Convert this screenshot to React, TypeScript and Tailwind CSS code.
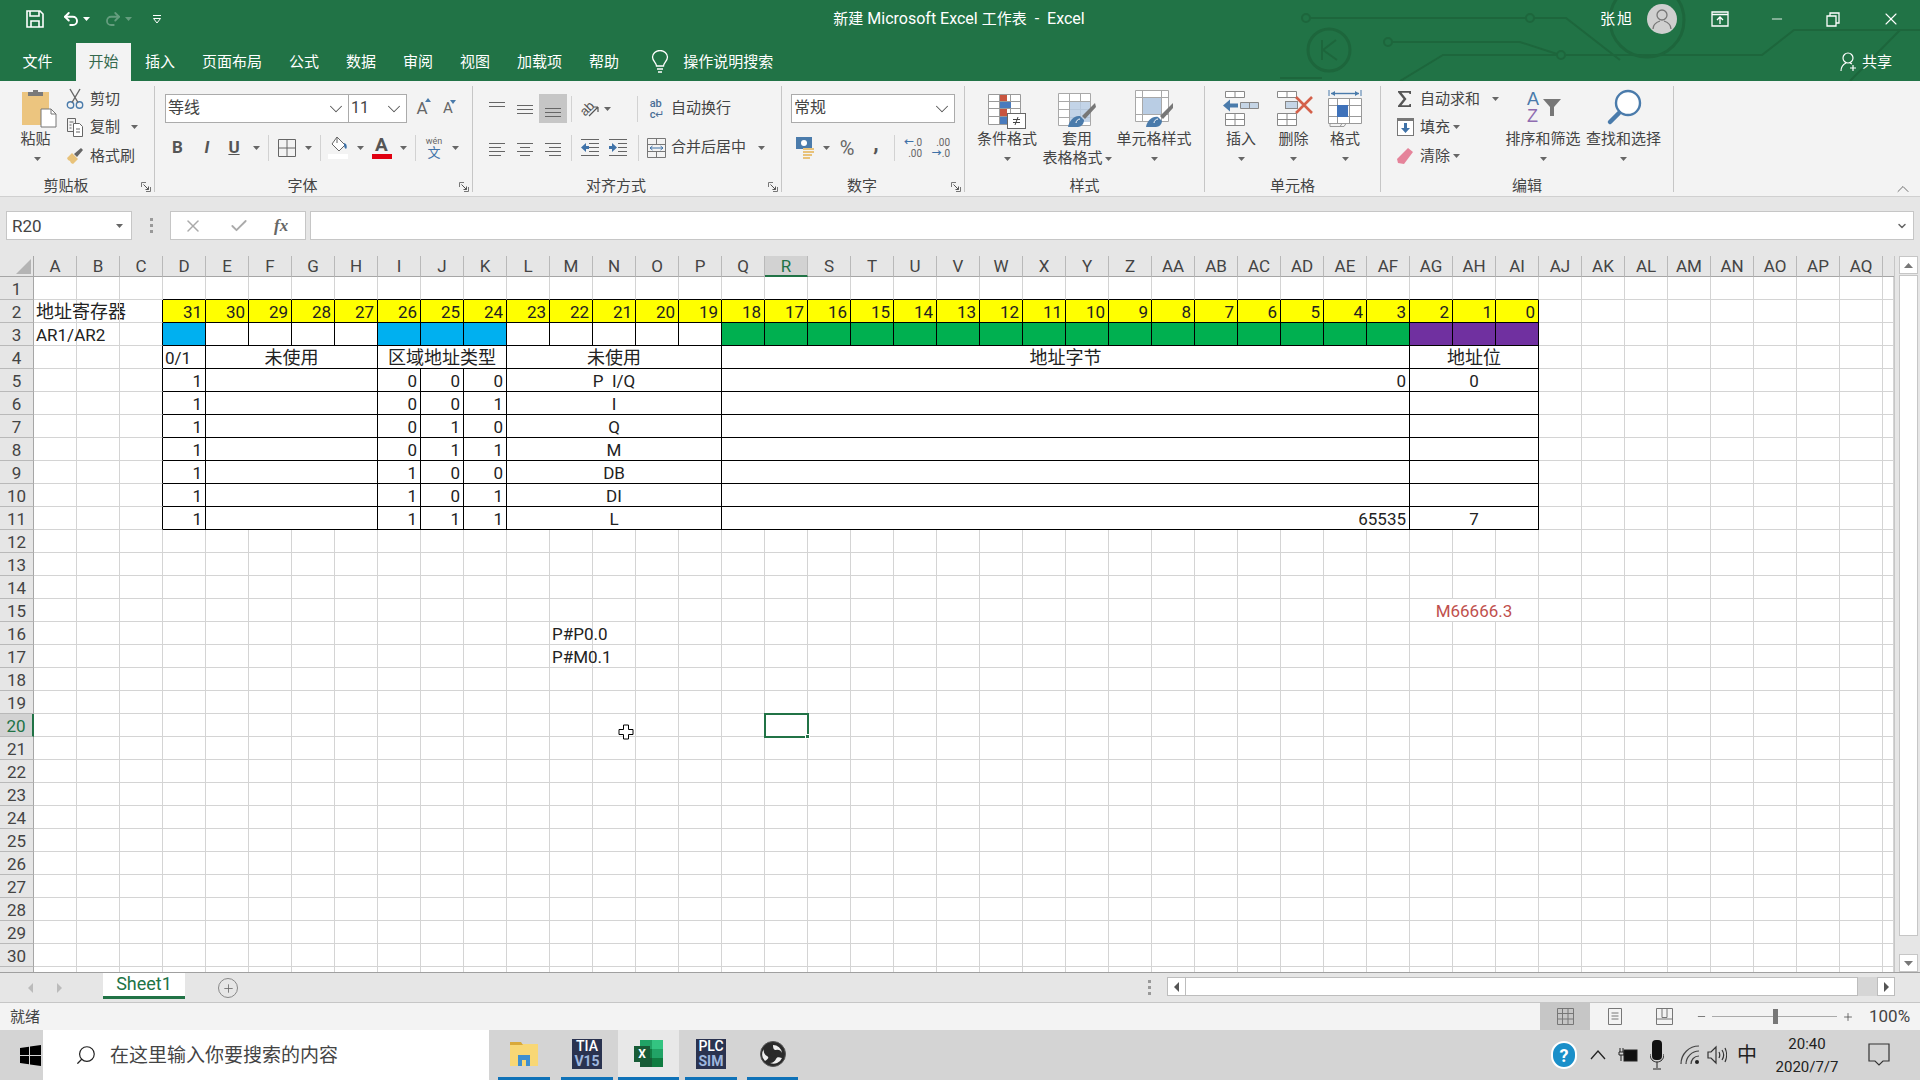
import React from "react";
import { ChevronDown, ChevronUp, Minus, Plus, X, Check, Undo2, Redo2, Search } from "lucide-react";

const Tri = ({ c = "#666" }: { c?: string }) => (
  <svg width="7" height="4" viewBox="0 0 7 4" className="shrink-0"><path d="M0 0h7L3.5 4z" fill={c} /></svg>
);

const Launcher = () => (
  <svg width="10" height="10" viewBox="0 0 10 10" className="absolute right-[3px] bottom-[0px]">
    <path d="M.5 5V.5H5M9.5 5v4.5H5" fill="none" stroke="#777" />
    <path d="M2.5 2.5L7.5 7.5M7.5 4.5v3h-3" fill="none" stroke="#555" />
  </svg>
);

const Group = ({ className, label, launcher, children }: { className: string; label: string; launcher?: boolean; children: React.ReactNode }) => (
  <div className={"relative flex flex-col h-[106px] shrink-0 border-r border-[#c6c6c6] " + className}>
    <div className="flex-1 min-h-0 flex flex-col">{children}</div>
    <div className={"h-[16px] leading-[20px] text-center text-[15px] whitespace-nowrap " + (launcher ? "pr-[22px]" : "")}>{label}</div>
    {launcher && <Launcher />}
  </div>
);

const Big = ({ className, icon, lines, top = "pt-[4px]" }: { className: string; icon: React.ReactNode; lines: string[]; top?: string }) => (
  <div className={"flex flex-col items-center shrink-0 " + className}>
    <div className={"h-[44px] flex items-start justify-center " + top}>{icon}</div>
    <div className="h-[19px] leading-[19px] text-[15px] whitespace-nowrap">{lines[0]}</div>
    {lines[1] ? (
      <div className="h-[19px] leading-[19px] text-[15px] whitespace-nowrap flex items-center gap-[2px]">{lines[1]}<Tri /></div>
    ) : (
      <div className="h-[19px] flex items-center"><Tri /></div>
    )}
  </div>
);

const Lines = ({ rows }: { rows: [number, number, number][] }) => (
  <svg width="20" height="18" viewBox="0 0 20 18">
    {rows.map(([y, a, b], i) => <path key={i} d={`M${a} ${y}.5H${b}`} stroke="#666" strokeWidth="1" />)}
  </svg>
);

const Sep = ({ className = "" }: { className?: string }) => <div className={"w-px h-[26px] bg-[#d2d2d2] shrink-0 " + className} />;

const Combo = ({ className, text }: { className: string; text: string }) => (
  <div className={"h-[29px] bg-white border border-[#ababab] flex items-center justify-between pl-[2px] pr-[1px] text-[16px] shrink-0 " + className}>
    <span className="pb-[1px]">{text}</span>
    <ChevronDown size={22} strokeWidth={1.1} color="#555" />
  </div>
);

const PasteIcon = () => (
  <svg width="36" height="40" viewBox="0 0 36 40">
    <rect x="1" y="4" width="27" height="33" fill="#ecc57f" />
    <path d="M7 8V4h5V2h5v2h5v4z" fill="#7a7a7a" />
    <path d="M20 21h10l5 5v13H20z" fill="#fff" stroke="#777" />
    <path d="M30 21v5h5" fill="none" stroke="#777" />
  </svg>
);
const Scissors = () => (
  <svg width="18" height="22" viewBox="0 0 18 22" fill="none">
    <circle cx="4.5" cy="17" r="3.2" stroke="#4a7bab" strokeWidth="1.4" />
    <circle cx="13.5" cy="17" r="3.2" stroke="#4a7bab" strokeWidth="1.4" />
    <path d="M6 14.5L14 1M12 14.5L4 1" stroke="#666" strokeWidth="1.4" />
  </svg>
);
const CopyIcon = () => (
  <svg width="18" height="20" viewBox="0 0 18 20" fill="none" stroke="#666">
    <path d="M1.5 1.5h8v13h-8z" fill="#f3f3f3" />
    <path d="M7.5 6.5h6l3 3v10h-9z" fill="#fff" />
    <path d="M3.5 5h4M3.5 8h2M3.5 11h2M10 12h4M10 15h4" />
  </svg>
);
const BrushIcon = () => (
  <svg width="18" height="18" viewBox="0 0 18 18">
    <path d="M1 11l5-5 6 6-5 5-2-1-1-2-2-1z" fill="#e8c27a" />
    <path d="M8 7l7-6 2 2-6 7z" fill="#666" />
  </svg>
);
const CondIcon = () => (
  <svg width="38" height="36" viewBox="0 0 38 36">
    <path d="M.5.5h32v30H.5zM.5 7.500h32M.5 14.500h32M.5 22.500h32M11.500.5v30M22.500.5v30" fill="#fff" stroke="#9a9a9a" />
    <rect x="12" y="1" width="7" height="6" fill="#c9553f" />
    <rect x="12" y="8" width="11" height="6" fill="#4a7bbd" />
    <rect x="12" y="15" width="7" height="7" fill="#c9553f" />
    <rect x="12" y="23" width="7" height="7" fill="#4a7bbd" />
    <rect x="19.5" y="19.5" width="18" height="15" fill="#fff" stroke="#666" />
    <path d="M25 25.500h7M25 28.500h7M27 31l3-8" stroke="#444" fill="none" />
  </svg>
);
const TableStyleIcon = () => (
  <svg width="38" height="36" viewBox="0 0 38 36">
    <path d="M.5.5h32v32H.5zM.5 8.500h32M.5 16.500h32M.5 24.500h32M11.500.5v32M22.500.5v32" fill="#fff" stroke="#a8a8a8" />
    <rect x="12" y="9" width="20" height="20" fill="#b9cde4" opacity=".85" />
    <path d="M37 10l1 4-11 12-3-3z" fill="#777" />
    <path d="M10 34c1-6 6-12 12-11l4 4c0 4-3 7-6 7z" fill="#4a7bab" />
    <path d="M18 30c0-2 2-4 4-4" stroke="#fff" fill="none" />
  </svg>
);
const CellStyleIcon = () => (
  <svg width="38" height="38" viewBox="0 0 38 38">
    <path d="M.5.5h33v31H.5z" fill="#fff" stroke="#a8a8a8" />
    <path d="M7.500.5v31M26.500.5v31M.5 7.500h33M.5 24.500h33" fill="none" stroke="#a8a8a8" />
    <rect x="8" y="8" width="18" height="16" fill="#b9cde4" />
    <path d="M38 13v5L28 29l-3-3z" fill="#777" />
    <path d="M11 37c1-6 6-11 12-10l4 4c0 3-3 6-6 6z" fill="#4a7bab" />
    <path d="M19 33c0-2 2-4 4-4" stroke="#fff" fill="none" />
  </svg>
);
const InsertIcon = () => (
  <svg width="36" height="40" viewBox="0 0 36 40">
    <path d="M2.500 1.500h19v6h-19zM12 1.500v6M2.500 23.500h19v12h-19zM2.500 29.500h19M12 23.500v12" fill="#fff" stroke="#888" />
    <path d="M17.500 12.500h18v6h-18zM26.500 12.500v6" fill="#c5d5e6" stroke="#888" />
    <path d="M0 15.500l7-6v4h8v4H7v4z" fill="#4a7bab" />
  </svg>
);
const DeleteIcon = () => (
  <svg width="38" height="40" viewBox="0 0 38 40">
    <path d="M2.500 1.500h19v6h-19zM12 1.500v6M2.500 23.500h19v12h-19zM2.500 29.500h19M12 23.500v12" fill="#fff" stroke="#888" />
    <rect x="10.500" y="11.500" width="12" height="7" fill="#c5d5e6" stroke="#888" />
    <path d="M21 7l16 16M37 7L21 23" stroke="#d4604a" strokeWidth="2.600" />
  </svg>
);
const FormatIcon = () => (
  <svg width="34" height="42" viewBox="0 0 34 42">
    <path d="M1 1v6M33 1v6" stroke="#4a7bab" />
    <path d="M3 4.500h28" stroke="#4a7bab" strokeWidth="1.400" />
    <path d="M3 4.500l4-2.500v5zM31 4.500l-4-2.500v5z" fill="#4a7bab" />
    <path d="M.5 9.500h33v25H.5zM9.500 9.500v25M21.500 9.500v25M.5 16.500h33M.5 27.500h33" fill="#fff" stroke="#999" />
    <rect x="9" y="16" width="11" height="12" fill="#3f72ba" />
    <path d="M2 34.500v3h10l2-3h4l-2 3h-5" fill="none" stroke="#999" />
  </svg>
);
const SortIcon = () => (
  <svg width="38" height="42" viewBox="0 0 38 42">
    <text x="3" y="16" fontSize="18" fill="#4a7bab" fontFamily="Liberation Sans">A</text>
    <text x="3" y="33" fontSize="18" fill="#8f6cb0" fontFamily="Liberation Sans">Z</text>
    <path d="M19 10h18l-7 8v9h-4v-9z" fill="#777" />
  </svg>
);
const FindIcon = () => (
  <svg width="36" height="42" viewBox="0 0 36 42" fill="none">
    <circle cx="22" cy="14" r="12" stroke="#4a7bab" strokeWidth="2.400" fill="#fff" />
    <path d="M13 24L4 33" stroke="#4a7bab" strokeWidth="4.500" strokeLinecap="round" />
  </svg>
);
const SumIcon = () => (
  <svg width="16" height="18" viewBox="0 0 16 18"><path d="M1 1h13v3h-1.500l-.5-1.300H4.500L9.500 9l-5 6.300H12l.5-1.300H14v3H1v-1.300L6.500 9 1 2.300z" fill="#555" /></svg>
);
const FillIcon = () => (
  <svg width="17" height="18" viewBox="0 0 17 18"><rect x=".5" y=".5" width="16" height="17" fill="#fff" stroke="#777" /><rect x="0" y="0" width="17" height="3" fill="#777" /><path d="M7 5h3v5h3l-4.500 5L4 10h3z" fill="#3f72a8" /></svg>
);
const EraserIcon = () => (
  <svg width="18" height="18" viewBox="0 0 18 18"><path d="M12 1l5 4-9 12-6-1-1-4z" fill="#e5839a" /></svg>
);

const Bulb = () => (
  <svg width="18" height="24" viewBox="0 0 18 24" fill="none" stroke="#fff" strokeWidth="1.300">
    <path d="M5.500 16c0-3-4-5-4-9a7.500 6.500 0 0 1 15 0c0 4-4 6-4 9z" />
    <path d="M6 19h6M7 22h4" />
  </svg>
);

const Circuit = () => (
  <svg width="640" height="81" viewBox="1280 0 640 81" className="absolute right-0 top-0" fill="none" stroke="#1d663c" strokeWidth="2">
    <circle cx="1306" cy="18" r="4" />
    <path d="M1310 18H1526M1534 18H1566L1620 60" />
    <circle cx="1530" cy="18" r="4" />
    <circle cx="1388" cy="42" r="4" />
    <path d="M1392 42H1520L1557 54" />
    <circle cx="1561" cy="55" r="4" />
    <path d="M1280 78L1322 78M1400 81L1443 55H1556M1566 55H1762L1794 30H1920M1850 81L1900 30" />
    <circle cx="1329" cy="50" r="21" strokeWidth="3" />
    <path d="M1322 40v20M1336 40l-13 10 14 10" />
    <circle cx="1647" cy="20" r="37" strokeWidth="3" />
  </svg>
);

const TitleBar = () => (
  <div className="relative h-[81px] bg-[#217346] text-white overflow-hidden shrink-0">
    <Circuit />
    <div className="relative h-[43px] flex items-center">
      <div className="flex-1 flex items-center pl-[26px] pb-[5px]">
        <svg width="18" height="18" viewBox="0 0 18 18" fill="none" stroke="#fff" strokeWidth="1.600">
          <path d="M1 1h13l3 3v13H1z" /><path d="M4 1v5h9V1M5 17v-6h8v6" />
        </svg>
        <Undo2 size={18} strokeWidth={2.600} className="ml-[18px]" />
        <span className="ml-[3px]"><Tri c="#fff" /></span>
        <Redo2 size={18} strokeWidth={2.400} className="ml-[14px] opacity-30" />
        <span className="ml-[3px] opacity-30"><Tri c="#fff" /></span>
        <svg width="10" height="9" viewBox="0 0 10 9" className="ml-[20px]" fill="none" stroke="#fff"><path d="M1 .5h8M1.500 3.500h7L5 8z" /></svg>
      </div>
      <div className="text-[16px] pb-[6px] whitespace-nowrap -translate-x-px"><span className="text-[15px]">新建</span> Microsoft Excel <span className="text-[15px]">工作表</span> &nbsp;-&nbsp; Excel</div>
      <div className="flex-1 flex items-center justify-end pl-[26px] pb-[5px]">
        <span className="text-[15px] tracking-[2px]">张旭</span>
        <span className="ml-[13px] w-[30px] h-[30px] rounded-full bg-[#cfcfcf] flex items-center justify-center">
          <svg width="20" height="22" viewBox="0 0 20 22" fill="none" stroke="#777" strokeWidth="1.300">
            <circle cx="10" cy="7" r="5" /><path d="M1 21c0-5 4-7 7-8M19 21c0-5-4-7-7-8" />
          </svg>
        </span>
        <svg width="18" height="16" viewBox="0 0 18 16" className="ml-[34px]" fill="none" stroke="#fff" strokeWidth="1.300">
          <path d="M1 1h16v14H1zM1 3.500h16" /><path d="M9 13V7M6 9l3-3 3 3" />
        </svg>
        <Minus size={16} strokeWidth={1.300} className="ml-[40px]" />
        <svg width="14" height="15" viewBox="0 0 14 15" className="ml-[41px]" fill="none" stroke="#fff" strokeWidth="1.300">
          <path d="M1 4h9v10H1zM4 4V1h9v10h-3" />
        </svg>
        <X size={20} strokeWidth={1.300} className="ml-[41px] mr-[19px]" />
      </div>
    </div>
    <div className="relative h-[38px] flex items-stretch pl-[8px] text-[15px]">
      <div className="w-[59px] flex items-center justify-center">文件</div>
      <div className="w-[9px]" />
      <div className="w-[55px] bg-[#f3f3f3] text-[#35694d] flex items-center justify-center">开始</div>
      <div className="ml-[1px] flex items-center gap-[27px] pl-[13px]">
        <span>插入</span><span>页面布局</span><span>公式</span><span>数据</span><span>审阅</span><span>视图</span><span>加载项</span><span>帮助</span>
      </div>
      <div className="ml-[32px] flex items-center"><Bulb /><span className="ml-[14px]">操作说明搜索</span></div>
      <div className="flex-1 flex items-center justify-end pr-[28px]">
        <svg width="18" height="20" viewBox="0 0 18 20" fill="none" stroke="#fff" strokeWidth="1.200" className="mr-[4px]">
          <circle cx="8" cy="6" r="5" /><path d="M1 19c0-5 3-7 5-8M10 11l2 1M13 13v6M10 16h6" />
        </svg>
        <span>共享</span>
      </div>
    </div>
  </div>
);

const Row = ({ className = "", children }: { className?: string; children: React.ReactNode }) => (
  <div className={"flex items-center shrink-0 " + className}>{children}</div>
);
const S = ({ className, children }: { className: string; children?: React.ReactNode }) => (
  <span className={"flex items-center justify-center shrink-0 " + className}>{children}</span>
);

const Ribbon = () => (
  <div className="relative h-[116px] bg-[#f3f3f3] text-[#444] pt-[5px] flex border-b border-[#d0d0d0] shrink-0 text-[15px]">
    <Group className="w-[155px]" label="剪贴板" launcher>
      <div className="flex">
        <div className="w-[66px] shrink-0 flex flex-col items-center pl-[8px]">
          <div className="h-[44px] pt-[2px] pl-[4px]"><PasteIcon /></div>
          <div className="h-[19px] leading-[19px] pr-[3px]">粘贴</div>
          <div className="h-[19px] flex items-center"><Tri /></div>
        </div>
        <div className="flex flex-col -mt-[1px]">
          <Row className="h-[28px]"><S className="w-[18px]"><Scissors /></S><span className="ml-[6px]">剪切</span></Row>
          <Row className="h-[28px]"><S className="w-[18px]"><CopyIcon /></S><span className="ml-[6px]">复制</span><span className="ml-[11px]"><Tri /></span></Row>
          <Row className="h-[30px]"><S className="w-[18px]"><BrushIcon /></S><span className="ml-[6px]">格式刷</span></Row>
        </div>
      </div>
    </Group>
    <Group className="w-[318px]" label="字体" launcher>
      <Row className="mt-[8px] pl-[10px]">
        <Combo className="w-[184px]" text="等线" />
        <Combo className="w-[59px] -ml-px" text="11" />
        <S className="w-[30px] text-[17px] text-[#666]"><span className="relative">A<svg width="6" height="4" viewBox="0 0 6 4" className="absolute -right-[3px] top-[2px]"><path d="M0 4L3 0l3 4z" fill="#4a7bab" /></svg></span></S>
        <S className="w-[22px] text-[15px] text-[#666]"><span className="relative">A<svg width="6" height="4" viewBox="0 0 6 4" className="absolute -right-[3px] top-[3px]"><path d="M0 0h6L3 4z" fill="#4a7bab" /></svg></span></S>
      </Row>
      <Row className="mt-[10px] h-[29px] pl-[10px]">
        <S className="w-[25px] font-bold text-[17px] text-[#555]">B</S>
        <S className="w-[34px] italic font-bold text-[17px] text-[#555]">I</S>
        <S className="w-[20px] underline font-bold text-[17px] text-[#555]">U</S>
        <S className="w-[24px]"><Tri /></S>
        <Sep />
        <S className="w-[35px]"><svg width="18" height="18" viewBox="0 0 18 18" fill="none" stroke="#666"><path d="M.5.500h17v17H.5zM9 .500v17M.5 9h17" /></svg></S>
        <S className="w-[8px]"><Tri /></S>
        <Sep className="ml-[8px]" />
        <S className="w-[36px]"><svg width="22" height="23" viewBox="0 0 22 23"><path d="M9 1l8 8-6 6-7-7z" fill="#fff" stroke="#666" /><path d="M9 1v6" stroke="#666" /><path d="M16 7l2 1c1 2 1 4 0 5-2-1-2-4-2-6z" fill="#3f72a8" /><rect x="0" y="18" width="20" height="5" fill="#fff" /></svg></S>
        <S className="w-[6px]"><Tri /></S>
        <S className="w-[37px]"><span className="flex flex-col items-center"><span className="text-[19px] leading-[16px] font-bold text-[#555]">A</span><span className="w-[20px] h-[5px] bg-[#e00010] mt-[1px]" /></span></S>
        <S className="w-[6px]"><Tri /></S>
        <Sep className="ml-[9px]" />
        <S className="w-[36px]"><span className="flex flex-col items-center text-[#3f72a8]"><span className="text-[9px] leading-[10px] text-[#666]">wén</span><span className="text-[13px] leading-[13px]">文</span></span></S>
        <S className="w-[6px]"><Tri /></S>
      </Row>
    </Group>
    <Group className="w-[309px]" label="对齐方式" launcher>
      <Row className="mt-[8px] h-[29px] pl-[10px]">
        <S className="w-[28px]"><Lines rows={[[2, 2, 18], [6, 2, 18]]} /></S>
        <S className="w-[28px]"><Lines rows={[[5, 2, 18], [9, 2, 18], [13, 2, 18]]} /></S>
        <S className="w-[28px] h-[29px] bg-[#c6c6c6]"><Lines rows={[[8, 2, 18], [12, 2, 18], [16, 2, 18]]} /></S>
        <Sep className="ml-[4px]" />
        <S className="w-[26px] ml-[5px]"><svg width="22" height="20" viewBox="0 0 22 20" fill="none" className="overflow-visible"><text x="1" y="14" fontSize="13" fill="#555" fontFamily="Liberation Sans" transform="rotate(-45 8 10)">ab</text><path d="M10 17l9-9M19 8v5M19 8h-5" stroke="#555" strokeWidth="1.200" /></svg></S>
        <S className="w-[6px] ml-[1px]"><Tri /></S>
        <Sep className="ml-[27px]" />
        <S className="w-[20px] ml-[9px]"><span className="flex flex-col text-[11px] leading-[11px] text-[#4a6f96] items-start font-medium"><span>ab</span><span>c↵</span></span></S>
        <span className="ml-[4px]">自动换行</span>
      </Row>
      <Row className="mt-[10px] h-[29px] pl-[10px]">
        <S className="w-[28px]"><Lines rows={[[4, 2, 18], [8, 2, 14], [12, 2, 18], [16, 2, 14]]} /></S>
        <S className="w-[28px]"><Lines rows={[[4, 2, 18], [8, 5, 15], [12, 2, 18], [16, 5, 15]]} /></S>
        <S className="w-[28px]"><Lines rows={[[4, 2, 18], [8, 6, 18], [12, 2, 18], [16, 6, 18]]} /></S>
        <Sep className="ml-[4px]" />
        <S className="w-[28px] ml-[4px]"><svg width="20" height="20" viewBox="0 0 20 20" fill="none" stroke="#666"><path d="M1 1.500h18M9 5.500h10M9 9.500h10M9 13.500h10M1 17.500h18" /><path d="M1 9.500L6 5v3h3v3H6v3z" fill="#3f72a8" stroke="none" /></svg></S>
        <S className="w-[28px]"><svg width="20" height="20" viewBox="0 0 20 20" fill="none" stroke="#666"><path d="M1 1.500h18M10 5.500h9M10 9.500h9M10 13.500h9M1 17.500h18" /><path d="M9 9.500L4 5v3H1v3h3v3z" fill="#3f72a8" stroke="none" /></svg></S>
        <Sep className="ml-[6px]" />
        <S className="w-[20px] ml-[7px]"><svg width="19" height="20" viewBox="0 0 19 20" fill="none" stroke="#777"><path d="M.5.500h18v19H.5zM.5 6.500h18M.5 13.500h18M9.500.500v6M9.500 13.500v6" /><path d="M3 10h13M3 10l2.500-2M3 10l2.500 2M16 10l-2.500-2M16 10l-2.500 2" stroke="#3f72a8" /></svg></S>
        <span className="ml-[5px]">合并后居中</span>
        <span className="ml-[12px]"><Tri /></span>
      </Row>
    </Group>
    <Group className="w-[183px]" label="数字" launcher>
      <Row className="mt-[8px] pl-[9px]"><Combo className="w-[164px]" text="常规" /></Row>
      <Row className="mt-[10px] h-[29px] pl-[10px]">
        <S className="w-[25px]"><svg width="20" height="24" viewBox="0 0 20 24"><rect x="1" y="1" width="16" height="12" fill="#4a7bab" /><circle cx="9" cy="7" r="3" fill="#fff" /><path d="M8 13h11M8 16h11M8 19h9M8 22h7" stroke="#e8c27a" strokeWidth="2" /></svg></S>
        <S className="w-[6px] ml-[6px]"><Tri /></S>
        <S className="w-[26px] ml-[5px] text-[20px] text-[#666]">%</S>
        <S className="w-[26px] ml-[3px] text-[22px] font-bold text-[#555] pb-[8px]">,</S>
        <Sep className="ml-[5px]" />
        <S className="w-[26px] ml-[5px]"><span className="flex flex-col text-[10px] leading-[11px] items-end text-[#666]"><span><span className="text-[#3f72a8] font-bold">←</span>.0</span><span>.00</span></span></S>
        <S className="w-[26px] ml-[2px]"><span className="flex flex-col text-[10px] leading-[11px] items-end text-[#666]"><span>.00</span><span><span className="text-[#3f72a8] font-bold">→</span>.0</span></span></S>
      </Row>
    </Group>
    <Group className="w-[240px]" label="样式">
      <div className="flex">
        <Big className="w-[84px]" icon={<CondIcon />} lines={["条件格式"]} top="pt-[8px]" />
        <Big className="w-[56px]" icon={<TableStyleIcon />} lines={["套用", "表格格式"]} top="pt-[7px]" />
        <Big className="w-[98px]" icon={<CellStyleIcon />} lines={["单元格样式"]} />
      </div>
    </Group>
    <Group className="w-[176px]" label="单元格">
      <div className="flex">
        <Big className="w-[72px]" icon={<InsertIcon />} lines={["插入"]} />
        <Big className="w-[33px]" icon={<DeleteIcon />} lines={["删除"]} />
        <Big className="w-[70px]" icon={<FormatIcon />} lines={["格式"]} top="pt-[3px]" />
      </div>
    </Group>
    <Group className="w-[293px]" label="编辑">
      <div className="flex">
        <div className="w-[128px] shrink-0 pl-[14px] flex flex-col -mt-[1px]">
          <Row className="h-[28px]"><S className="w-[20px]"><SumIcon /></S><span className="ml-[5px]">自动求和</span><span className="ml-[12px]"><Tri /></span></Row>
          <Row className="h-[28px]"><S className="w-[20px]"><FillIcon /></S><span className="ml-[5px]">填充</span><span className="ml-[3px]"><Tri /></span></Row>
          <Row className="h-[30px]"><S className="w-[20px]"><EraserIcon /></S><span className="ml-[5px]">清除</span><span className="ml-[3px]"><Tri /></span></Row>
        </div>
        <Big className="w-[68px]" icon={<SortIcon />} lines={["排序和筛选"]} top="pt-[3px]" />
        <Big className="w-[93px]" icon={<FindIcon />} lines={["查找和选择"]} top="pt-[3px]" />
      </div>
    </Group>
    <div className="flex-1 relative">
      <ChevronUp size={20} strokeWidth={1} color="#555" className="absolute right-[7px] bottom-[-3px]" />
    </div>
  </div>
);

const FormulaBar = () => (
  <div className="h-[59px] bg-[#e6e6e6] pt-[14px] shrink-0 flex items-start">
    <div className="ml-[6px] w-[126px] h-[29px] bg-white border border-[#c6c6c6] flex items-center justify-between pl-[5px] pr-[8px] text-[17px] text-[#444]">
      <span className="pt-[2px]">R20</span><Tri />
    </div>
    <div className="w-[38px] h-[29px] flex items-center justify-center">
      <svg width="3" height="15" viewBox="0 0 3 15"><path d="M0 0h3v3H0zM0 6h3v3H0zM0 12h3v3H0z" fill="#999" /></svg>
    </div>
    <div className="w-[136px] h-[29px] bg-white border border-[#c6c6c6] flex items-center text-[#aaa]">
      <X size={20} strokeWidth={1.800} className="ml-[12px]" />
      <Check size={20} strokeWidth={2.200} className="ml-[26px]" />
      <span className="ml-[25px] italic font-bold text-[17px] text-[#666] [font-family:'Liberation_Serif',serif]">fx</span>
    </div>
    <div className="ml-[4px] w-[1604px] h-[29px] bg-white border border-[#c6c6c6] flex items-center justify-end pr-[5px]">
      <ChevronDown size={12} strokeWidth={3} color="#666" />
    </div>
  </div>
);

const colName = (i: number) => (i < 26 ? String.fromCharCode(65 + i) : "A" + String.fromCharCode(65 + i - 26));

type CellDef = { span?: number; text?: string; align?: "l" | "r" | "c"; bg?: string; boxed?: boolean; color?: string };

const D = 3, E = 4, I = 8, L = 11, Q = 16, AG = 32;

const bitBg = (c: number) => {
  if (c === D || (c >= I && c <= I + 2)) return "bg-[#00b0f0]";
  if (c >= Q && c < AG) return "bg-[#00b050]";
  if (c >= AG) return "bg-[#7030a0]";
  return "bg-white";
};

const dataRows: Record<number, string[]> = {
  5: ["1", "", "0", "0", "0", "P\u00a0\u00a0I/Q", "0", "0"],
  6: ["1", "", "0", "0", "1", "I", "", ""],
  7: ["1", "", "0", "1", "0", "Q", "", ""],
  8: ["1", "", "0", "1", "1", "M", "", ""],
  9: ["1", "", "1", "0", "0", "DB", "", ""],
  10: ["1", "", "1", "0", "1", "DI", "", ""],
  11: ["1", "", "1", "1", "1", "L", "65535", "7"],
};

function rowCells(r: number): Map<number, CellDef> {
  const m = new Map<number, CellDef>();
  if (r === 2) {
    m.set(0, { text: "地址寄存器", align: "l" });
    for (let c = D; c <= 34; c++) m.set(c, { text: String(34 - c), align: "r", bg: "bg-[#ffff00]", boxed: true });
  } else if (r === 3) {
    m.set(0, { text: "AR1/AR2", align: "l" });
    for (let c = D; c <= 34; c++) m.set(c, { bg: bitBg(c), boxed: true });
  } else if (r === 4) {
    m.set(D, { text: "0/1", align: "l", boxed: true });
    m.set(E, { span: 4, text: "未使用", align: "c", boxed: true });
    m.set(I, { span: 3, text: "区域地址类型", align: "c", boxed: true });
    m.set(L, { span: 5, text: "未使用", align: "c", boxed: true });
    m.set(Q, { span: 16, text: "地址字节", align: "c", boxed: true });
    m.set(AG, { span: 3, text: "地址位", align: "c", boxed: true });
  } else if (dataRows[r]) {
    const d = dataRows[r];
    m.set(D, { text: d[0], align: "r", boxed: true });
    m.set(E, { span: 4, boxed: true });
    m.set(I, { text: d[2], align: "r", boxed: true });
    m.set(I + 1, { text: d[3], align: "r", boxed: true });
    m.set(I + 2, { text: d[4], align: "r", boxed: true });
    m.set(L, { span: 5, text: d[5], align: "c", boxed: true });
    m.set(Q, { span: 16, text: d[6], align: "r", boxed: true });
    m.set(AG, { span: 3, text: d[7], align: "c", boxed: true });
  } else if (r === 15) {
    m.set(AG, { span: 3, text: "M66666.3", align: "c", color: "text-[#c0504d]" });
  } else if (r === 16) {
    m.set(12, { text: "P#P0.0", align: "l" });
  } else if (r === 17) {
    m.set(12, { text: "P#M0.1", align: "l" });
  }
  return m;
}

const spanClass: Record<number, string> = { 1: "", 3: "col-span-3", 4: "col-span-4", 5: "col-span-5", 16: "col-span-16" };

const isCjk = (t?: string) => !!t && /[\u4e00-\u9fff]/.test(t);

const Sheet = () => {
  const cells: React.ReactNode[] = [];
  cells.push(
    <div key="corner" className="bg-[#e6e6e6] border-r border-b border-[#a6a6a6] flex items-end justify-end p-[2px]">
      <svg width="15" height="15" viewBox="0 0 15 15"><path d="M15 0v15H0z" fill="#b4b4b4" /></svg>
    </div>
  );
  for (let c = 0; c < 43; c++) {
    const sel = c === 17;
    cells.push(
      <div key={"h" + c} className={"flex items-center justify-center border-r border-[#b9b9b9] " + (sel ? "bg-[#d2d2d2] text-[#217346] border-b-2 border-b-[#217346]" : "bg-[#e6e6e6] text-[#444] border-b border-b-[#a6a6a6]")}>
        {colName(c)}
      </div>
    );
  }
  cells.push(<div key="hx" className="bg-[#e6e6e6] border-b border-[#a6a6a6]" />);

  for (let r = 1; r <= 31; r++) {
    const sel = r === 20;
    cells.push(
      <div key={"r" + r} className={"flex items-center justify-center pt-[2px] border-r " + (sel ? "bg-[#d2d2d2] text-[#217346] border-r-2 border-r-[#217346] border-b border-b-[#b9b9b9]" : "bg-[#e6e6e6] text-[#444] border-r-[#a6a6a6] border-b border-b-[#b9b9b9]")}>
        {r <= 30 ? r : ""}
      </div>
    );
    const defs = rowCells(r);
    let c = 0;
    while (c < 44) {
      const d = defs.get(c) || {};
      const span = d.span || 1;
      const rightBoxed = d.boxed || (r >= 2 && r <= 11 && c === 2);
      const belowBoxed = d.boxed || (r === 1 && c >= D && c <= 34);
      const isSel = r === 20 && c === 17;
      const align = d.align === "r" ? "justify-end pr-[3px]" : d.align === "c" ? "justify-center" : "justify-start pl-[2px]";
      cells.push(
        <div
          key={r + "-" + c}
          className={
            "flex items-center whitespace-nowrap min-w-0 pt-[2px] border-r border-b " +
            (rightBoxed ? "border-r-black " : "border-r-[#d4d4d4] ") +
            (belowBoxed ? "border-b-black " : "border-b-[#d4d4d4] ") +
            (isCjk(d.text) ? "text-[18px] " : "text-[17px] ") +
            (d.bg || "") + " " + align + " " + spanClass[span] + " " + (d.color || "text-[#222]") + " " +
            (isSel ? "relative z-10 outline-2 outline-[#217346] -outline-offset-1" : "")
          }
        >
          {d.text}
          {isSel && <span className="absolute -right-[3px] -bottom-[3px] w-[5px] h-[5px] bg-[#217346] border border-white" />}
        </div>
      );
      c += span;
    }
  }

  return (
    <div className="flex h-[717px] bg-white shrink-0 overflow-hidden border-b border-[#a0a0a0]">
      <div className="w-[1894px] shrink-0 overflow-hidden grid grid-cols-[34px_repeat(43,43px)_11px] grid-rows-[21px_repeat(31,23px)] text-[17px] leading-[20px]">
        {cells}
      </div>
      <div className="flex-1 bg-[#e6e6e6] flex flex-col pl-[4px] pr-[2px] border-l border-[#c6c6c6]">
        <div className="h-[18px] bg-white border border-[#c6c6c6] flex items-center justify-center"><svg width="9" height="5" viewBox="0 0 9 5"><path d="M0 5h9L4.500 0z" fill="#777" /></svg></div>
        <div className="mt-px h-[661px] bg-white border border-[#c6c6c6]" />
        <div className="flex-1" />
        <div className="h-[18px] bg-white border border-[#c6c6c6] flex items-center justify-center"><svg width="9" height="5" viewBox="0 0 9 5"><path d="M0 0h9L4.500 5z" fill="#777" /></svg></div>
      </div>
    </div>
  );
};

const SheetBar = () => (
  <div className="h-[29px] bg-[#e6e6e6] flex items-start shrink-0 text-[#555]">
    <svg width="5" height="10" viewBox="0 0 5 10" className="ml-[28px] mt-[10px]"><path d="M5 0v10L0 5z" fill="#bbb" /></svg>
    <svg width="5" height="10" viewBox="0 0 5 10" className="ml-[24px] mt-[10px]"><path d="M0 0v10l5-5z" fill="#bbb" /></svg>
    <div className="ml-[41px] w-[82px] h-[26px] bg-white border-b-[3px] border-[#217346] text-[#217346] text-[18px] leading-[21px] text-center">Sheet1</div>
    <div className="ml-[33px] mt-[5px] w-[20px] h-[20px] rounded-full border border-[#888] flex items-center justify-center"><Plus size={13} strokeWidth={1.500} color="#666" /></div>
    <svg width="3" height="15" viewBox="0 0 3 15" className="ml-[910px] mt-[7px]"><path d="M0 0h3v3H0zM0 6h3v3H0zM0 12h3v3H0z" fill="#999" /></svg>
    <div className="ml-[16px] mt-[4px] w-[19px] h-[19px] bg-white border border-[#bdbdbd] flex items-center justify-center"><svg width="5" height="10" viewBox="0 0 5 10"><path d="M5 0v10L0 5z" fill="#555" /></svg></div>
    <div className="mt-[4px] w-[672px] h-[19px] bg-white border border-l-0 border-[#bdbdbd]" />
    <div className="mt-[4px] w-[19px] h-[19px] bg-[#d6d6d6]" />
    <div className="mt-[4px] w-[18px] h-[19px] bg-white border border-[#bdbdbd] flex items-center justify-center"><svg width="5" height="10" viewBox="0 0 5 10"><path d="M0 0v10l5-5z" fill="#555" /></svg></div>
  </div>
);

const StatusBar = () => (
  <div className="h-[28px] bg-[#f3f3f3] border-t border-[#c6c6c6] flex items-center shrink-0 text-[15px] text-[#444]">
    <span className="ml-[10px] pt-[2px]">就绪</span>
    <div className="flex-1" />
    <div className="w-[380px] h-full shrink-0 flex items-center">
      <div className="w-[50px] h-full bg-[#c6c6c6] flex items-center justify-center">
        <svg width="17" height="17" viewBox="0 0 17 17" fill="none" stroke="#777"><path d="M.5.500h16v16H.5zM.5 5.500h16M.5 11h16M5.500.500v16M11 .500v16" /></svg>
      </div>
      <div className="w-[49px] flex items-center justify-center">
        <svg width="14" height="17" viewBox="0 0 14 17" fill="none" stroke="#777"><path d="M.5.500h13v16H.5zM3.500 5h7M3.500 8h7M3.500 11h7" /></svg>
      </div>
      <div className="w-[50px] flex items-center justify-center">
        <svg width="17" height="17" viewBox="0 0 17 17" fill="none" stroke="#777"><path d="M.5.500h16v16H.5zM6 .500v9h5v-9M.5 11h16" /></svg>
      </div>
      <Minus size={11} strokeWidth={1.500} className="ml-[7px] shrink-0" />
      <div className="ml-[5px] w-[125px] h-px bg-[#aaa] flex items-center shrink-0">
        <span className="ml-[61px] w-[5px] h-[15px] bg-[#777]" />
      </div>
      <Plus size={12} strokeWidth={1.500} className="ml-[5px] shrink-0" />
      <span className="ml-[15px] text-[17px]">100%</span>
    </div>
  </div>
);

const Under = ({ className, children }: { className: string; children: React.ReactNode }) => (
  <div className={"h-[50px] flex flex-col shrink-0 " + className}>
    <div className="flex-1 flex items-center justify-center">{children}</div>
    <div className="h-[3px] bg-[#0f72b8]" />
  </div>
);

const Taskbar = () => (
  <div className="h-[50px] bg-[#d4d4d4] flex items-center shrink-0 text-[#222]">
    <div className="w-[43px] h-full flex items-center justify-center shrink-0 pl-[19px] pr-[2px]">
      <svg width="21" height="21" viewBox="0 0 21 21" className="shrink-0"><path d="M0 3l9-1.300V10H0zM10 1.500L21 0v10H10zM0 11h9v8.300L0 18zM10 11h11v10l-11-1.500z" fill="#000" /></svg>
    </div>
    <div className="w-[446px] h-full bg-white flex items-center shrink-0">
      <Search size={22} strokeWidth={1.300} className="ml-[32px] -scale-x-100" color="#222" />
      <span className="ml-[13px] pt-[2px] text-[19px] text-[#444] whitespace-nowrap">在这里输入你要搜索的内容</span>
    </div>
    <Under className="w-[52px] ml-[9px]">
      <svg width="30" height="26" viewBox="0 0 30 26"><path d="M1 3h28v22H1z" fill="#f8d775" /><path d="M1 1h11l2 3H1z" fill="#d9a93a" /><path d="M9 25V14h12v11h-4v-6h-4v6z" fill="#3f8fd0" /></svg>
    </Under>
    <Under className="w-[52px] ml-[11px]">
      <div className="w-[30px] h-[30px] bg-[#2a3350] flex flex-col items-center justify-center text-[14px] leading-[15px] font-medium">
        <span className="text-white">TIA</span><span className="text-[#9db6de] font-bold">V15</span>
      </div>
    </Under>
    <div className="w-[61px] ml-[5px] h-[50px] flex flex-col bg-[#e8e8e8] shrink-0">
      <div className="flex-1 flex items-center justify-center">
        <div className="relative w-[29px] h-[28px]">
          <div className="ml-[6px] w-[23px] h-[28px] rounded-[2px] grid grid-cols-2 grid-rows-3">
            <div className="bg-[#21a366]" /><div className="bg-[#33c481]" />
            <div className="bg-[#107c41]" /><div className="bg-[#21a366]" />
            <div className="bg-[#185c37]" /><div className="bg-[#107c41]" />
          </div>
          <div className="absolute left-0 top-[6px] w-[16px] h-[16px] bg-[#185c37] text-white text-[12px] leading-[16px] text-center font-bold">X</div>
        </div>
      </div>
      <div className="h-[3px] bg-[#0f72b8]" />
    </div>
    <Under className="w-[52px] ml-[6px]">
      <div className="w-[30px] h-[30px] bg-[#2a3350] flex flex-col items-center justify-center text-[14px] leading-[15px] font-medium">
        <span className="text-white">PLC</span><span className="text-[#9db6de] font-bold">SIM</span>
      </div>
    </Under>
    <Under className="w-[51px] ml-[10px]">
      <svg width="26" height="26" viewBox="0 0 26 26"><circle cx="13" cy="13" r="12.500" fill="#2a2a2a" stroke="#555" /><path d="M13 4a9 9 0 0 1 9 8c-1-3-4-4-6-3-2 0-3-1-3-5z" fill="#eee" /><path d="M5 20a9 9 0 0 1-1-12c-1 3 1 6 3 7 2 1 2 2-2 5z" fill="#eee" /><path d="M22 17a9 9 0 0 1-12 5c3 0 5-2 6-4 1-2 2-2 6-1z" fill="#eee" /><circle cx="13" cy="13" r="2.500" fill="#2a2a2a" /></svg>
    </Under>
    <div className="flex-1" />
    <div className="flex items-center">
      <div className="w-[26px] h-[28px] rounded-full bg-[#1a8fc9] border-2 border-white flex items-center justify-center text-white font-bold text-[18px]">?</div>
      <svg width="16" height="10" viewBox="0 0 16 10" className="ml-[13px]" fill="none" stroke="#222" strokeWidth="1.300"><path d="M1 9l7-8 7 8" /></svg>
      <svg width="20" height="16" viewBox="0 0 20 16" className="ml-[12px]"><path d="M2 1v4M5 1v4M1 5h5v3H1zM3 8v6" stroke="#222" fill="none" /><rect x="6" y="3" width="13" height="11" fill="#111" stroke="#222" /></svg>
      <svg width="14" height="30" viewBox="0 0 14 30" className="ml-[12px]"><rect x="2" y="0" width="10" height="20" rx="4" fill="#111" /><path d="M0 14c0 5 3 8 7 8s7-3 7-8M7 22v6M3 29h8" fill="none" stroke="#222" /></svg>
      <svg width="20" height="20" viewBox="0 0 20 20" className="ml-[16px]" fill="none" stroke="#444" strokeWidth="1.200"><path d="M1 19C1 9 9 1 19 1M6 19c0-7 6-13 13-13M11 19c0-4 3-8 8-8" /><circle cx="17" cy="17" r="2" fill="#222" stroke="none" /></svg>
      <svg width="20" height="20" viewBox="0 0 20 20" className="ml-[7px]" fill="none" stroke="#333" strokeWidth="1.200"><path d="M1 7h3l5-5v16l-5-5H1zM12 7c1 2 1 4 0 6M15 5c2 3 2 7 0 10M18 3c2 4 2 10 0 14" /></svg>
      <span className="ml-[10px] text-[20px] text-[#222]">中</span>
    </div>
    <div className="ml-[10px] pt-[2px] w-[80px] flex flex-col items-center text-[15px] leading-[23px]">
      <span>20:40</span><span>2020/7/7</span>
    </div>
    <svg width="22" height="24" viewBox="0 0 22 24" className="ml-[21px] mr-[30px]" fill="none" stroke="#333" strokeWidth="1.200"><path d="M1 1h20v17h-6l-4 4-4-4H1z" /></svg>
  </div>
);

const Cursor = () => (
  <svg width="16" height="16" viewBox="0 0 16 16" className="absolute left-[618px] top-[724px] z-20">
    <path d="M5.500 1h5v4.500H15v5h-4.500V15h-5v-4.500H1v-5h4.500z" fill="#fff" stroke="#000" />
  </svg>
);

export default function App() {
  return (
    <div className="relative w-[1920px] h-[1080px] overflow-hidden flex flex-col bg-[#e6e6e6] [font-family:Roboto,'Noto_Sans_CJK_SC',sans-serif]">
      <TitleBar />
      <Ribbon />
      <FormulaBar />
      <Sheet />
      <SheetBar />
      <StatusBar />
      <Taskbar />
      <Cursor />
    </div>
  );
}
